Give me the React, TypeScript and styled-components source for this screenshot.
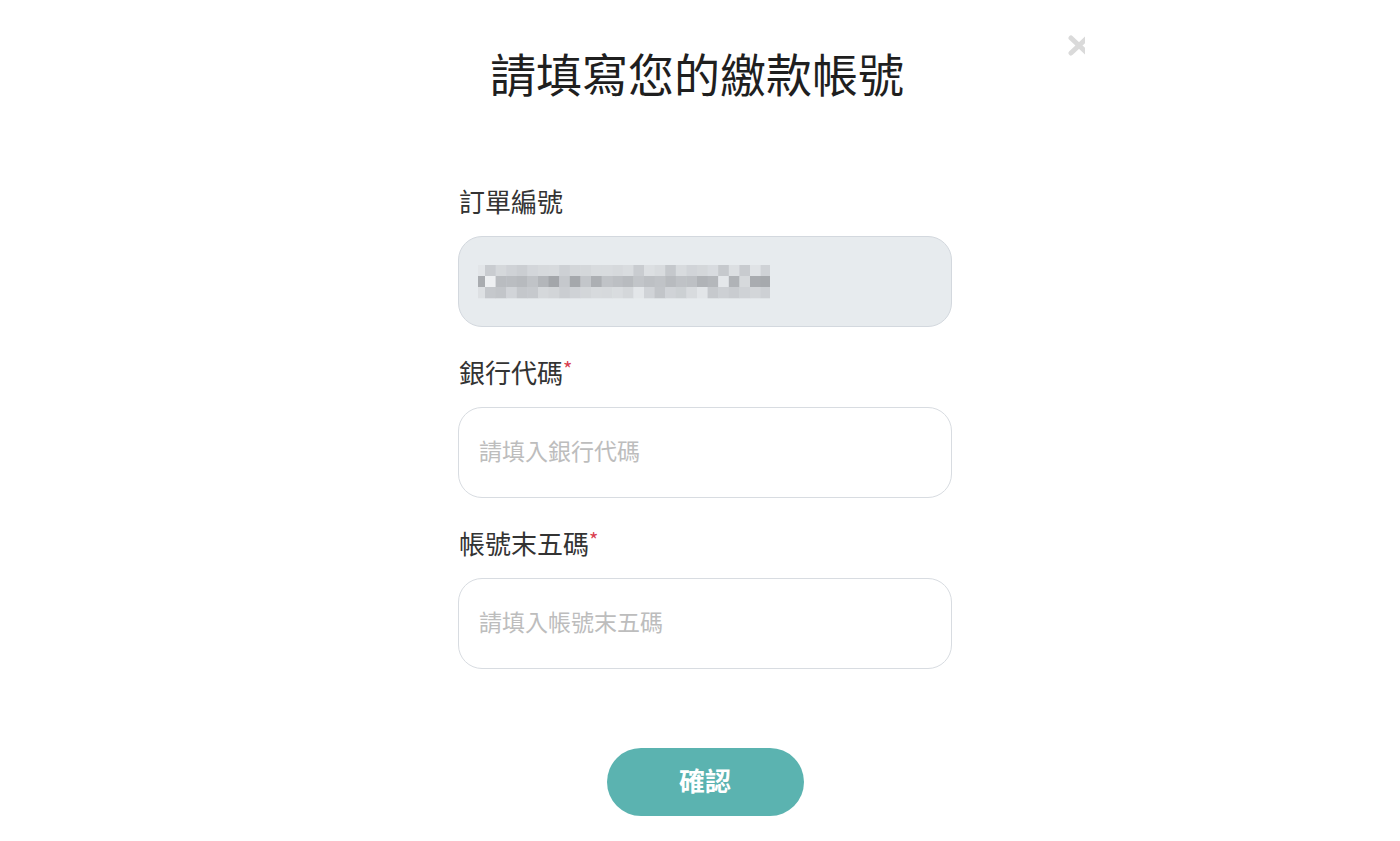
import React from "react";
import styled, { createGlobalStyle } from "styled-components";

const GlobalStyle = createGlobalStyle`
  html, body {
    margin: 0;
    padding: 0;
    background: #ffffff;
  }
  body {
    font-family: "Noto Sans CJK TC", "Noto Sans", sans-serif;
    color: #222;
  }
`;

const Modal = styled.div`
  position: relative;
  width: 1400px;
  height: 841px;
  box-sizing: border-box;
  padding-top: 37px;
  display: flex;
  flex-direction: column;
  align-items: center;
  background: #fff;
`;

const Title = styled.h1`
  margin: 0 0 0 -6px;
  font-size: 46px;
  line-height: 70px;
  font-weight: 400;
  color: #1f1f1f;
  letter-spacing: 0;
`;

const CloseButton = styled.button`
  position: absolute;
  top: 35px;
  left: 1067px;
  width: 18px;
  height: 21px;
  padding: 0;
  border: none;
  background: transparent;
  overflow: hidden;
  cursor: pointer;
  display: block;
`;

const Form = styled.form`
  width: 494px;
  margin: 76px 0 0 10px;
  display: flex;
  flex-direction: column;
`;

const Field = styled.div`
  display: flex;
  flex-direction: column;
  gap: 18px;
  margin-bottom: 27px;
`;

const Label = styled.label`
  font-size: 26px;
  line-height: 35px;
  color: #333;
  font-weight: 400;
  padding-left: 1px;
`;

const Required = styled.span`
  color: #d9404f;
  font-size: 20px;
  vertical-align: top;
  line-height: 30px;
`;

const InputBox = styled.div<{ $disabled?: boolean }>`
  height: 91px;
  box-sizing: border-box;
  border: 1.5px solid ${(p) => (p.$disabled ? "#d3d8de" : "#d8dce1")};
  border-radius: 24px;
  background: ${(p) => (p.$disabled ? "#e7ebee" : "#fff")};
  display: flex;
  align-items: center;
  padding: 0 20px ${(p) => (p.$disabled ? "0" : "5px")};
`;

const Input = styled.input`
  width: 100%;
  border: none;
  outline: none;
  background: transparent;
  font-family: "Noto Sans CJK TC", "Noto Sans", sans-serif;
  font-size: 23px;
  color: #333;
  padding: 0;
  &::placeholder {
    color: #bdbdbd;
  }
`;

const Mosaic = styled.svg`
  display: block;
  margin-left: -1px;
`;

const ButtonRow = styled.div`
  display: flex;
  justify-content: center;
  margin-top: 52px;
`;

const Submit = styled.button`
  width: 197px;
  height: 68px;
  border: none;
  border-radius: 34px;
  background: #5bb3b0;
  color: #fff;
  font-family: "Noto Sans CJK TC", "Noto Sans", sans-serif;
  font-size: 26px;
  font-weight: 700;
  padding: 0 0 5px;
  cursor: pointer;
`;

const rows: string[][] = [
  ["e2e5e8","c9ccd0","d5d8db","cfd2d6","cbced2","d3d6da","d6d9dc","d7dadd","cdd0d4","d3d6d9","d4d7da","d8dbde","d8dbde","d6d9dc","d9dcdf","c9ccd0","dcdfe2","d8dbde","c5c8cc","d8dbde","d1d4d8","d4d7da","d8dbdf","c6c9cd","dcdfe2","c8cbcf","e0e3e6","cfd2d6"],
  ["a9acb0","eef0f2","b9bcc0","babdc1","b7babe","c0c3c7","b3b6ba","a3a6aa","c5c8cc","a5a8ac","c3c6ca","acafb3","c0c3c7","bcbfc3","b8bbbf","c2c5c9","bdc0c4","c0c3c7","b8bbbf","bfc2c6","bdc0c4","b0b3b7","b4b7bb","e4e7ea","b0b3b7","d6d9dc","a9acb0","a6a9ad"],
  ["dde0e3","c5c8cc","c2c5c9","d1d4d8","c4c7cb","c6c9cd","d5d8db","d2d5d8","cacdd1","cfd2d6","d3d6d9","d7dadd","d6d9dc","d9dcdf","d4d7da","e3e6e9","d0d3d7","c2c5c9","d0d3d7","ccd0d3","d8dbde","e2e5e8","c6c9cd","cdd0d4","c9ccd0","cfd2d6","d3d6d9","cdd0d4"],
];

function BlurredValue() {
  const cw = 10.6;
  const ch = 11;
  const first = 7;
  return (
    <Mosaic width="292" height="35" viewBox="0 -1 292 35" aria-label="訂單編號">
      <defs>
        <filter id="soft" x="-5%" y="-10%" width="110%" height="120%">
          <feGaussianBlur stdDeviation="0.7" />
        </filter>
      </defs>
      <g filter="url(#soft)">
        {rows.map((row, r) =>
          row.map((c, i) => {
            const x = i === 0 ? 0 : first + (i - 1) * cw;
            const w = i === 0 ? first : cw + 0.4;
            return <rect key={`${r}-${i}`} x={x} y={r * ch} width={w} height={ch + 0.3} fill={`#${c}`} />;
          })
        )}
      </g>
    </Mosaic>
  );
}

export default function App() {
  return (
    <>
      <GlobalStyle />
      <Modal>
        <CloseButton type="button" aria-label="close">
          <svg width="26" height="21" viewBox="0 0 26 21">
            <path d="M4 3 L20 18 M20 3 L4 18" stroke="#dadada" strokeWidth="5" strokeLinecap="round" fill="none" />
          </svg>
        </CloseButton>
        <Title>請填寫您的繳款帳號</Title>
        <Form onSubmit={(e) => e.preventDefault()}>
          <Field>
            <Label>訂單編號</Label>
            <InputBox $disabled>
              <BlurredValue />
            </InputBox>
          </Field>
          <Field>
            <Label>
              銀行代碼<Required>*</Required>
            </Label>
            <InputBox>
              <Input placeholder="請填入銀行代碼" />
            </InputBox>
          </Field>
          <Field>
            <Label>
              帳號末五碼<Required>*</Required>
            </Label>
            <InputBox>
              <Input placeholder="請填入帳號末五碼" />
            </InputBox>
          </Field>
          <ButtonRow>
            <Submit type="submit">確認</Submit>
          </ButtonRow>
        </Form>
      </Modal>
    </>
  );
}
